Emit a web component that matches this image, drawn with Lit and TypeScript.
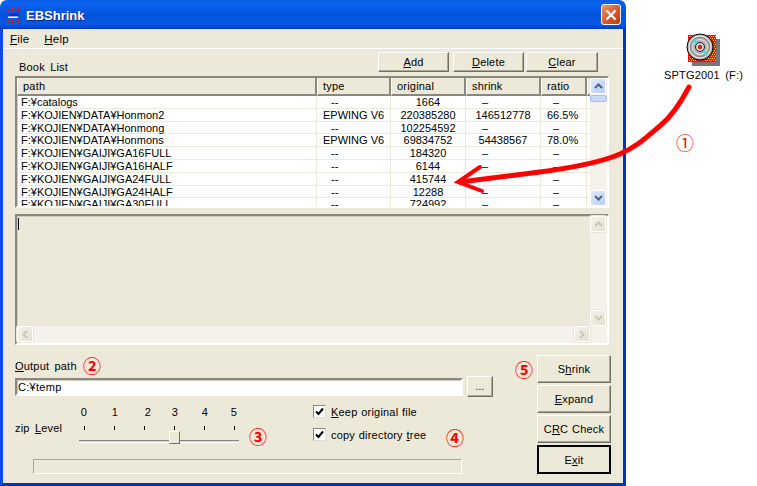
import {LitElement, html, css, svg} from 'lit';
import {customElement} from 'lit/decorators.js';

const COLS = '300px 74px 75px 75px 46px 5px';
const HEADERS = ['path', 'type', 'original', 'shrink', 'ratio', ''];

// path, type, original, shrink, ratio
const ROWS = [
  ['F:¥catalogs', '--', '1664', '–', '–'],
  ['F:¥KOJIEN¥DATA¥Honmon2', 'EPWING V6', '220385280', '146512778', '66.5%'],
  ['F:¥KOJIEN¥DATA¥Honmong', '--', '102254592', '–', '–'],
  ['F:¥KOJIEN¥DATA¥Honmons', 'EPWING V6', '69834752', '54438567', '78.0%'],
  ['F:¥KOJIEN¥GAIJI¥GA16FULL', '--', '184320', '–', '–'],
  ['F:¥KOJIEN¥GAIJI¥GA16HALF', '--', '6144', '–', '–'],
  ['F:¥KOJIEN¥GAIJI¥GA24FULL', '--', '415744', '–', '–'],
  ['F:¥KOJIEN¥GAIJI¥GA24HALF', '--', '12288', '–', '–'],
  ['F:¥KOJIEN¥GAIJI¥GA30FULL', '--', '724992', '–', '–'],
];

// label text sits a little off the ticks in the reference
const LEVELS = [[0, 0], [1, 1], [2, 4], [3, 1], [4, 1], [5, 0]];
const NOTES = [
  ['①', 685, 142, 'thin'],
  ['②', 92, 365, ''],
  ['③', 258, 436, ''],
  ['④', 455, 437, ''],
  ['⑤', 524, 369, ''],
];

const up = svg`<svg width="9" height="6" viewBox="0 0 9 6"><path d="M1 5L4.500 1.500L8 5" fill="none" stroke="currentColor" stroke-width="2"/></svg>`;
const down = svg`<svg width="9" height="6" viewBox="0 0 9 6"><path d="M1 1L4.500 4.500L8 1" fill="none" stroke="currentColor" stroke-width="2"/></svg>`;
const left = svg`<svg width="6" height="9" viewBox="0 0 6 9"><path d="M5 1L1.500 4.500L5 8" fill="none" stroke="currentColor" stroke-width="2"/></svg>`;
const right = svg`<svg width="6" height="9" viewBox="0 0 6 9"><path d="M1 1L4.500 4.500L1 8" fill="none" stroke="currentColor" stroke-width="2"/></svg>`;
const check = svg`<svg width="9" height="9" viewBox="0 0 9 9"><path d="M1 4.500L3.500 7L8 1.500" fill="none" stroke="#000" stroke-width="2"/></svg>`;

@customElement('app-root')
export class AppRoot extends LitElement {
  static styles = css`
    :host {
      display: block;
      position: relative;
      width: 757px;
      height: 486px;
      overflow: hidden;
      background: #fff;
      font-family: "Liberation Sans", Arial, sans-serif;
      font-size: 11px;
      letter-spacing: 0.2px;
      word-spacing: 0.5px;
      color: #000;
    }
    u { text-underline-offset: 1px; }
    .window {
      width: 626px;
      height: 486px;
      display: flex;
      flex-direction: column;
      background: #ece9d8;
      border-radius: 7px 7px 0 0;
      overflow: hidden;
    }
    .title {
      height: 29px;
      flex: none;
      box-sizing: border-box;
      display: flex;
      align-items: center;
      padding: 2px 5px 0 7px;
      background: linear-gradient(#0a5ce4 0, #0a62ee 10%, #0353dc 50%, #0458e4 85%, #0335c4 100%);
    }
    .title-icon { margin-right: 3px; }
    .title-text {
      flex: 1;
      color: #fff;
      font-weight: bold;
      font-size: 13px;
      letter-spacing: 0;
      text-shadow: 1px 1px 0 #0a2a90;
    }
    .close {
      width: 20px;
      height: 21px;
      margin-top: -2px;
      box-sizing: border-box;
      display: flex;
      align-items: center;
      justify-content: center;
      border: 1px solid #fff;
      border-radius: 3px;
      background: linear-gradient(135deg, #e8987c, #d8552e 55%, #c03c14);
    }
    .frame {
      flex: 1;
      min-height: 0;
      display: flex;
      flex-direction: column;
      border-left: 3px solid #0a4ae0;
      border-right: 3px solid #0335b4;
      border-bottom: 3px solid #0335b4;
    }
    .menu {
      height: 19px;
      flex: none;
      display: flex;
      align-items: center;
      gap: 15px;
      padding-left: 7px;
      border-bottom: 1px solid #fff;
      font-size: 11.500px;
    }
    .content {
      flex: 1;
      display: flex;
      flex-direction: column;
      padding: 3px 12px 0;
    }
    .toolbar {
      height: 20px;
      flex: none;
      display: flex;
      align-items: flex-end;
      padding: 0 13px 0 4px;
    }
    .toolbar .label { flex: 1; line-height: 14px; margin-bottom: -2px; word-spacing: 2px; }
    .toolbar .btn { width: 71px; height: 20px; margin-left: 4px; }
    .toolbar .btn + .btn + .btn { margin-left: 2px; width: 72px; }
    .btn {
      box-sizing: border-box;
      display: flex;
      align-items: center;
      justify-content: center;
      background: #ece9d8;
      border: 1px solid;
      border-color: #fff #716f64 #716f64 #fff;
      box-shadow: inset -1px -1px 0 #aca899;
    }
    .sunken {
      box-sizing: border-box;
      border: 2px solid;
      border-color: #8a887c #fff #fff #8a887c;
      box-shadow: inset 1px 1px 0 #d0cdbc;
    }
    .list {
      width: 594px;
      height: 132px;
      margin-top: 4px;
      flex: none;
      display: flex;
      background: #fff;
      overflow: hidden;
    }
    .grid { flex: 1; min-width: 0; overflow: hidden; }
    .head, .row { display: grid; grid-template-columns: ${css([COLS] as any)}; }
    .head {
      height: 18px;
      background: #ece9d8;
    }
    .head div {
      box-sizing: border-box;
      line-height: 16px;
      padding-left: 5px;
      border-left: 1px solid #fff;
      border-right: 2px solid #8a887c;
      border-bottom: 2px solid #8a887c;
    }
    .head div:last-child { border-right: none; }
    .row { height: 12.800px; box-sizing: border-box; border-bottom: 1px solid #ece9d8; }
    .row div {
      line-height: 12px;
      white-space: nowrap;
      letter-spacing: 0;
      word-spacing: 0;
      border-right: 1px solid #ece9d8;
      box-sizing: border-box;
    }
    .row div:last-child { border-right: none; }
    .c0 { padding-left: 4px; }
    .c1 { padding-left: 6px; }
    .c1.dash { padding-left: 14px; }
    .c2 { text-align: center; }
    .c3 { text-align: center; }
    .c3.dash { text-align: left; padding-left: 16px; }
    .c4 { padding-left: 6px; }
    .c4.dash { padding-left: 12px; }
    .vbar {
      width: 17px;
      flex: none;
      display: flex;
      flex-direction: column;
      background: #f4f2ea;
    }
    .vbar .track { flex: 1; min-height: 0; }
    .hbar {
      height: 17px;
      flex: none;
      display: flex;
      justify-content: space-between;
      background: #f4f2ea;
    }
    .sb {
      width: 16px;
      height: 16px;
      flex: none;
      box-sizing: border-box;
      display: flex;
      align-items: center;
      justify-content: center;
      border: 1px solid #fff;
      border-radius: 2px;
      color: #4d6185;
      background: linear-gradient(135deg, #e1eafe, #b8cdf8);
    }
    .sb.off {
      color: #c9c7ba;
      background: linear-gradient(135deg, #f4f2e8, #e4e1d2);
      box-shadow: 0 0 0 1px #e8e6da;
    }
    .thumb {
      height: 7px;
      margin-top: 1px;
      box-sizing: border-box;
      border: 1px solid #a8c0ee;
      border-radius: 2px;
      background: #c8d8fa;
    }
    .memo {
      width: 594px;
      height: 131px;
      margin-top: 6px;
      flex: none;
      display: flex;
      flex-direction: column;
      background: #ece9d8;
    }
    .memo-main { flex: 1; min-height: 0; display: flex; }
    .memo-text { flex: 1; padding: 2px 1px; }
    .caret { width: 1px; height: 12px; background: #000; }
    .bottom {
      flex: 1;
      display: flex;
      margin-top: 10px;
    }
    .left { width: 522px; flex: none; display: flex; flex-direction: column; }
    .out-label { height: 21px; line-height: 22px; word-spacing: 2px; }
    .path-row { display: flex; align-items: center; height: 21px; }
    .path-input {
      width: 448px;
      height: 18px;
      background: #fff;
      line-height: 14px;
      padding-left: 1px;
      letter-spacing: 0.3px;
    }
    .browse { width: 26px; height: 21px; margin-left: 4px; font-size: 10px; }
    .options { display: flex; height: 62px; }
    .zip-label { width: 64px; flex: none; padding-top: 24px; line-height: 14px; word-spacing: 2px; }
    .slider { width: 162px; flex: none; padding-top: 8px; }
    .numbers { display: grid; grid-template-columns: repeat(6, 30px); height: 14px; line-height: 14px; margin-left: 0; }
    .numbers span { text-align: center; margin-left: -10px; width: 30px; }
    .ticks { display: grid; grid-template-columns: repeat(6, 30px); height: 4px; margin-top: 7px; margin-left: 5px; }
    .ticks i { width: 1px; height: 4px; background: #000; }
    .rail {
      position: relative;
      height: 3px;
      width: 160px;
      margin-top: 10px;
      box-sizing: border-box;
      border-top: 1px solid #8a887c;
      border-bottom: 1px solid #fff;
      background: #d8d5c6;
    }
    .knob {
      position: absolute;
      left: 90px;
      top: -10px;
      width: 11px;
      height: 13px;
      box-sizing: border-box;
      background: #ece9d8;
      border: 1px solid;
      border-color: #fff #716f64 #716f64 #fff;
    }
    .checks { margin-left: 72px; padding-top: 8px; display: flex; flex-direction: column; gap: 10px; }
    .check { display: flex; align-items: center; gap: 5px; height: 13px; }
    .box {
      width: 13px;
      height: 13px;
      box-sizing: border-box;
      display: flex;
      align-items: center;
      justify-content: center;
      background: #fff;
      border: 1px solid;
      border-color: #8a887c #ddd #ddd #8a887c;
    }
    .progress {
      width: 429px;
      height: 15px;
      margin: 0 0 0 18px;
      box-sizing: border-box;
      border: 1px solid;
      border-color: #aca899 #fff #fff #aca899;
    }
    .actions { width: 74px; flex: none; display: flex; flex-direction: column; gap: 2px; }
    .actions .btn { height: 28px; }
    .actions .btn.default {
      height: 29px;
      border: 2px solid #000;
      box-shadow: none;
    }
    .note {
      position: absolute;
      color: #f00;
      font-family: "Noto Sans CJK JP", sans-serif;
      font-size: 18px;
      line-height: 18px;
      letter-spacing: 0;
      font-weight: bold;
      transform: translate(-50%, -50%);
    }
    .note.thin { font-weight: normal; }
    .drive {
      position: absolute;
      left: 650px;
      top: 33px;
      width: 107px;
      display: flex;
      flex-direction: column;
      align-items: center;
      gap: 2px;
      word-spacing: 2px;
    }
    .arrow { position: absolute; left: 0; top: 0; pointer-events: none; }
  `;

  cellClass(i: number, v: string) {
    return `c${i}` + (v === '--' || v === '–' ? ' dash' : '');
  }

  renderBookList() {
    return html`
      <div class="list sunken">
        <div class="grid">
          <div class="head">${HEADERS.map((h) => html`<div>${h}</div>`)}</div>
          ${ROWS.map((r) => html`
            <div class="row">
              ${r.map((v, i) => html`<div class=${this.cellClass(i, v)}>${v}</div>`)}
              <div></div>
            </div>`)}
        </div>
        <div class="vbar">
          <div class="sb">${up}</div>
          <div class="track"><div class="thumb"></div></div>
          <div class="sb">${down}</div>
        </div>
      </div>`;
  }

  renderMemo() {
    return html`
      <div class="memo sunken">
        <div class="memo-main">
          <div class="memo-text"><div class="caret"></div></div>
          <div class="vbar">
            <div class="sb off">${up}</div>
            <div class="track"></div>
            <div class="sb off">${down}</div>
          </div>
        </div>
        <div class="hbar">
          <div class="sb off">${left}</div>
          <div class="sb off" style="margin-right:17px">${right}</div>
        </div>
      </div>`;
  }

  renderSlider() {
    return html`
      <div class="slider">
        <div class="numbers">
          ${LEVELS.map(([n, dx]) => html`<span style="transform:translateX(${dx}px)">${n}</span>`)}
        </div>
        <div class="ticks">${LEVELS.map(() => html`<i></i>`)}</div>
        <div class="rail"><div class="knob"></div></div>
      </div>`;
  }

  renderDisc() {
    const dots = [];
    for (let y = 3; y < 29; y += 2) {
      for (let x = 3 + (y % 4 === 1 ? 1 : 0); x < 30; x += 2) {
        if ((x - 14) * (x - 14) + (y - 14) * (y - 14) > 180) {
          dots.push(svg`<rect x=${x} y=${y} width="1" height="1"/>`);
        }
      }
    }
    return svg`<svg width="36" height="34" viewBox="0 0 36 34">
      <rect x="6" y="6" width="28" height="27" fill="#777"/>
      <rect x="2" y="2" width="28" height="27" fill="#e81808"/>
      <g fill="#f0d020">${dots}</g>
      <circle cx="14" cy="14" r="13" fill="#b4b4b4" stroke="#000"/>
      <circle cx="14" cy="14" r="11" fill="none" stroke="#ececec"/>
      <circle cx="14" cy="14" r="9.500" fill="none" stroke="#808080"/>
      <circle cx="14" cy="14" r="7.500" fill="none" stroke="#e4e4e4"/>
      <path d="M7 6L11 10M21 22L17 18" stroke="#40d8d8" stroke-width="2.500"/>
      <circle cx="14" cy="14" r="4.500" fill="#d8d8d8" stroke="#202020"/>
      <circle cx="14" cy="14" r="2.200" fill="#e81808"/>
    </svg>`;
  }

  render() {
    return html`
      <div class="window">
        <div class="title">
          <svg class="title-icon" width="16" height="17" viewBox="0 0 16 17">
            <path d="M0 1V5L3 3ZM5 1H7V5H5ZM12 1V5L9 3ZM0 12V16L3 14ZM5 12H7V16H5ZM12 12V16L9 14Z" fill="#f01010"/>
            <path d="M3 6H12L11 9.500H1Z" fill="#1c28c8"/>
            <rect x="1" y="9.500" width="10" height="1.500" fill="#fff"/>
          </svg>
          <div class="title-text">EBShrink</div>
          <div class="close">
            <svg width="12" height="12" viewBox="0 0 12 12"><path d="M1.500 1.500L10.500 10.500M10.500 1.500L1.500 10.500" stroke="#fff" stroke-width="2.200"/></svg>
          </div>
        </div>
        <div class="frame">
          <div class="menu"><span><u>F</u>ile</span><span><u>H</u>elp</span></div>
          <div class="content">
            <div class="toolbar">
              <div class="label">Book List</div>
              <div class="btn"><span><u>A</u>dd</span></div>
              <div class="btn"><span><u>D</u>elete</span></div>
              <div class="btn"><span><u>C</u>lear</span></div>
            </div>
            ${this.renderBookList()}
            ${this.renderMemo()}
            <div class="bottom">
              <div class="left">
                <div class="out-label"><u>O</u>utput path</div>
                <div class="path-row">
                  <div class="path-input sunken">C:¥temp</div>
                  <div class="btn browse">...</div>
                </div>
                <div class="options">
                  <div class="zip-label">zip <u>L</u>evel</div>
                  ${this.renderSlider()}
                  <div class="checks">
                    <div class="check"><div class="box">${check}</div><span><u>K</u>eep original file</span></div>
                    <div class="check"><div class="box">${check}</div><span>copy directory <u>t</u>ree</span></div>
                  </div>
                </div>
                <div class="progress"></div>
              </div>
              <div class="actions">
                <div class="btn"><span>S<u>h</u>rink</span></div>
                <div class="btn"><span><u>E</u>xpand</span></div>
                <div class="btn"><span>C<u>R</u>C Check</span></div>
                <div class="btn default"><span>E<u>x</u>it</span></div>
              </div>
            </div>
          </div>
        </div>
      </div>
      <div class="drive">${this.renderDisc()}<span>SPTG2001 (F:)</span></div>
      <svg class="arrow" width="757" height="486" viewBox="0 0 757 486">
        <path d="M689 87C680 104 672 116 661 125C648 136 637 147 620 154C600 163 570 168 540 172C510 176 485 179 460 182"
          fill="none" stroke="#f00" stroke-width="5" stroke-linecap="round"/>
        <path d="M480 167L458 182L482 191" fill="none" stroke="#f00" stroke-width="4" stroke-linecap="round"/>
      </svg>
      ${NOTES.map(([t, x, y, c]) => html`<span class="note ${c}" style="left:${x}px;top:${y}px">${t}</span>`)}
    `;
  }
}
